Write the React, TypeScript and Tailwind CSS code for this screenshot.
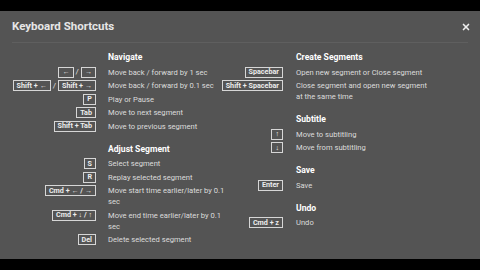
import { X } from "lucide-react";

type Row = { keys: string[]; text: string };
type Section = { title: string; rows: Row[] };

const left: Section[] = [
  {
    title: "Navigate",
    rows: [
      { keys: ["←", "→"], text: "Move back / forward by 1 sec" },
      { keys: ["Shift + ←", "Shift + →"], text: "Move back / forward by 0.1 sec" },
      { keys: ["P"], text: "Play or Pause" },
      { keys: ["Tab"], text: "Move to next segment" },
      { keys: ["Shift + Tab"], text: "Move to previous segment" },
    ],
  },
  {
    title: "Adjust Segment",
    rows: [
      { keys: ["S"], text: "Select segment" },
      { keys: ["R"], text: "Replay selected segment" },
      { keys: ["Cmd + ← / →"], text: "Move start time earlier/later by 0.1 sec" },
      { keys: ["Cmd + ↓ / ↑"], text: "Move end time earlier/later by 0.1 sec" },
      { keys: ["Del"], text: "Delete selected segment" },
    ],
  },
];

const right: Section[] = [
  {
    title: "Create Segments",
    rows: [
      { keys: ["Spacebar"], text: "Open new segment or Close segment" },
      { keys: ["Shift + Spacebar"], text: "Close segment and open new segment at the same time" },
    ],
  },
  {
    title: "Subtitle",
    rows: [
      { keys: ["↑"], text: "Move to subtitling" },
      { keys: ["↓"], text: "Move from subtitling" },
    ],
  },
  { title: "Save", rows: [{ keys: ["Enter"], text: "Save" }] },
  { title: "Undo", rows: [{ keys: ["Cmd + z"], text: "Undo" }] },
];

function Key({ label }: { label: string }) {
  return (
    <span className="inline-flex h-[11px] items-center border border-[#d6d6d6] px-[3px] text-[7.2px] font-bold leading-none text-[#ececec]">
      {label}
    </span>
  );
}

function Column({ sections, keyW, descW }: { sections: Section[]; keyW: string; descW: string }) {
  return (
    <div className="flex flex-col gap-[11px]">
      {sections.map((s) => (
        <div key={s.title} className="flex flex-col">
          <div className="flex">
            <div className={`${keyW} shrink-0`} />
            <div className="text-[8.6px] font-bold leading-[12px] text-white">{s.title}</div>
          </div>
          <div className="mt-[3.5px] flex flex-col gap-[2.5px]">
            {s.rows.map((r) => (
              <div key={r.text} className="flex">
                <div className={`${keyW} flex h-[11px] shrink-0 items-center justify-end gap-[2px] whitespace-nowrap text-[8px] text-[#e0e0e0]`}>
                  {r.keys.map((k, i) => (
                    <span key={k} className="flex items-center gap-[2px]">
                      {i > 0 && <span>/</span>}
                      <Key label={k} />
                    </span>
                  ))}
                </div>
                <div className={`${descW} text-[7.6px] leading-[11px] text-[#dcdcdc]`}>{r.text}</div>
              </div>
            ))}
          </div>
        </div>
      ))}
    </div>
  );
}

export default function App() {
  return (
    <div className="flex h-[270px] w-[480px] flex-col bg-black pt-[11px]" style={{ fontFamily: "Roboto, sans-serif" }}>
      <div className="flex h-[248px] flex-col bg-[#545454]">
        <div className="mx-3 flex h-[32px] items-center justify-between border-b border-[#5f5f5f]">
          <div className="text-[11.5px] font-bold text-[#e6e6e6]">Keyboard Shortcuts</div>
          <X size={10} strokeWidth={4} className="mr-[-3px] text-[#eeeeee]" />
        </div>
        <div className="flex pt-[8px]">
          <Column sections={left} keyW="w-[108px] pr-[12px]" descW="w-[118px]" />
          <Column sections={right} keyW="w-[70px] pr-[13px]" descW="w-[134px]" />
        </div>
      </div>
    </div>
  );
}
